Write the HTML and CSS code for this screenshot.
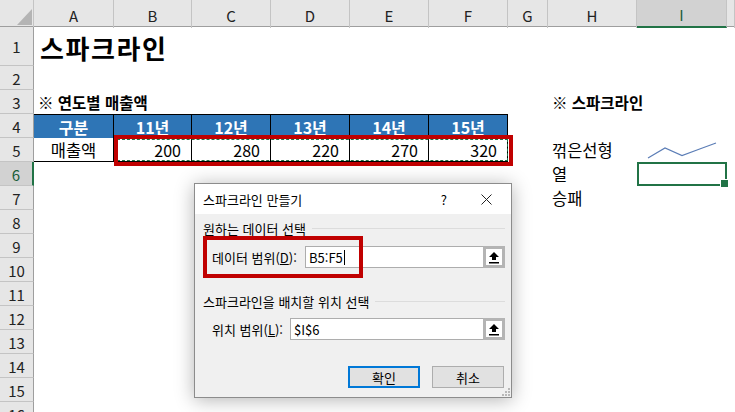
FILE: index.html
```html
<!DOCTYPE html>
<html lang="ko">
<head>
  <meta charset="UTF-8">
  <title>스파크라인</title>
  <link rel="stylesheet" href="styles.css">
</head>
<body>
  <div class="sheet">
    <div class="row head">
      <div class="corner">
        <svg width="34" height="27" viewBox="0 0 34 27"><polygon points="17,25 32,25 32,9" fill="#b4b4b4"/></svg>
      </div>
      <div class="ch">A</div>
      <div class="ch">B</div>
      <div class="ch">C</div>
      <div class="ch">D</div>
      <div class="ch">E</div>
      <div class="ch">F</div>
      <div class="ch">G</div>
      <div class="ch">H</div>
      <div class="ch sel">I</div>
      <div class="ch"></div>
    </div>

    <div class="row tall">
      <div class="rh">1</div>
      <div class="c title">스파크라인</div>
    </div>
    <div class="row"><div class="rh">2</div></div>
    <div class="row">
      <div class="rh">3</div>
      <div class="c bold">※ 연도별 매출액</div>
      <div class="c bold colH">※ 스파크라인</div>
    </div>
    <div class="row">
      <div class="rh">4</div>
      <div class="c th">구분</div>
      <div class="c th">11년</div>
      <div class="c th">12년</div>
      <div class="c th">13년</div>
      <div class="c th">14년</div>
      <div class="c th">15년</div>
    </div>
    <div class="row">
      <div class="rh">5</div>
      <div class="c td center">매출액</div>
      <div class="c td num">200</div>
      <div class="c td num">280</div>
      <div class="c td num">220</div>
      <div class="c td num">270</div>
      <div class="c td num">320</div>
      <div class="c colH">꺾은선형</div>
      <div class="c spark">
        <svg width="90" height="24" viewBox="0 0 90 24">
          <polyline points="11,20 28,10 45,17.5 62,11.3 79,5" fill="none" stroke="#5b7db6" stroke-width="1.2"/>
        </svg>
      </div>
    </div>
    <div class="row">
      <div class="rh sel">6</div>
      <div class="c colH">열</div>
      <div class="c selcell"></div>
    </div>
    <div class="row">
      <div class="rh">7</div>
      <div class="c colH">승패</div>
    </div>
    <div class="row"><div class="rh">8</div></div>
    <div class="row"><div class="rh">9</div></div>
    <div class="row"><div class="rh">10</div></div>
    <div class="row"><div class="rh">11</div></div>
    <div class="row"><div class="rh">12</div></div>
    <div class="row"><div class="rh">13</div></div>
    <div class="row"><div class="rh">14</div></div>
    <div class="row"><div class="rh">15</div></div>
    <div class="row"><div class="rh">16</div></div>

    <!-- copy marquee and highlight over B5:F5 -->
    <div class="ants"></div>
    <div class="mark mark-range"></div>

    <div class="dlg">
      <div class="dlg-title">
        <span class="dlg-name">스파크라인 만들기</span>
        <span class="dlg-help">?</span>
        <svg class="dlg-close" width="11" height="11" viewBox="0 0 11 11">
          <path d="M0.5 0.5 L10.5 10.5 M10.5 0.5 L0.5 10.5" stroke="#222" stroke-width="1"/>
        </svg>
      </div>

      <div class="group g1"><span>원하는 데이터 선택</span><i></i></div>
      <div class="field f1">
        <label>데이터 범위(<u>D</u>):</label>
        <div class="input w200">
          <span>B5:F5</span><span class="caret"></span>
          <div class="pick">
            <svg width="12" height="13" viewBox="0 0 12 13"><polygon points="6,1 11,6 8,6 8,9 4,9 4,6 1,6" fill="#000"/><rect x="1" y="11" width="10" height="1.5" fill="#000"/></svg>
          </div>
        </div>
      </div>

      <div class="group g2"><span>스파크라인을 배치할 위치 선택</span><i></i></div>
      <div class="field f2">
        <label>위치 범위(<u>L</u>):</label>
        <div class="input w215">
          <span>$I$6</span>
          <div class="pick">
            <svg width="12" height="13" viewBox="0 0 12 13"><polygon points="6,1 11,6 8,6 8,9 4,9 4,6 1,6" fill="#000"/><rect x="1" y="11" width="10" height="1.5" fill="#000"/></svg>
          </div>
        </div>
      </div>

      <div class="btns">
        <button class="btn primary">확인</button>
        <button class="btn">취소</button>
      </div>

      <svg class="grip" width="8" height="8" viewBox="0 0 8 8">
        <rect x="6" y="0" width="2" height="2" fill="#b8b8b8"/>
        <rect x="3" y="3" width="2" height="2" fill="#b8b8b8"/>
        <rect x="6" y="3" width="2" height="2" fill="#b8b8b8"/>
        <rect x="0" y="6" width="2" height="2" fill="#b8b8b8"/>
        <rect x="3" y="6" width="2" height="2" fill="#b8b8b8"/>
        <rect x="6" y="6" width="2" height="2" fill="#b8b8b8"/>
      </svg>

      <div class="mark mark-label"></div>
    </div>
  </div>
</body>
</html>
```

FILE: styles.css
```css
* {
  box-sizing: border-box;
}
body {
  margin: 0;
  font-family: "Noto Sans CJK KR", "Noto Sans", sans-serif;
  font-size: 15px;
  color: #000;
  background: #fff;
}
.sheet {
  position: relative;
  width: 735px;
  height: 412px;
  overflow: hidden;
}
.row {
  display: grid;
  grid-template-columns: 34px 80px 78px 79px 79px 79px 79px 40px 89px 90px 1fr;
  height: 24px;
  line-height: 1;
}
.row.tall {
  height: 39px;
}
.row.head {
  height: 27px;
  background: #e6e6e6;
  border-bottom: 1px solid #9e9e9e;
}
.corner {
  border-right: 1px solid #c4c4c4;
}
.ch {
  display: flex;
  align-items: center;
  justify-content: center;
  border-right: 1px solid #c4c4c4;
  color: #222;
  padding-top: 2px;
}
.ch.sel {
  background: #d2d2d2;
  color: #1b5e3a;
  border-bottom: 2px solid #217346;
}
.rh {
  display: flex;
  align-items: center;
  justify-content: center;
  background: #e6e6e6;
  border-right: 1px solid #9e9e9e;
  border-bottom: 1px solid #c4c4c4;
  color: #222;
  padding-top: 1px;
}
.rh.sel {
  background: #d2d2d2;
  color: #1b5e3a;
  border-right: 2px solid #217346;
}
.c {
  display: flex;
  align-items: center;
  padding: 1px 4px 0;
  white-space: nowrap;
  min-width: 0;
  font-size: 16.5px;
}
.colH {
  grid-column: 9;
}
.title {
  font-size: 26px;
  font-weight: bold;
  letter-spacing: 1.6px;
  align-items: flex-end;
  padding-left: 6px;
  padding-bottom: 5px;
}
.bold {
  font-weight: bold;
  font-size: 15.5px;
}
.th {
  background: #2e75b6;
  color: #fff;
  font-weight: bold;
  font-size: 16px;
  justify-content: center;
  border-top: 1px solid #000;
  border-right: 1px solid #000;
}
.td {
  border-right: 1px solid #000;
  border-bottom: 1px solid #000;
}
.center {
  justify-content: center;
}
.num {
  justify-content: flex-end;
  padding-right: 10px;
  font-size: 16px;
}
.spark {
  padding: 0;
}
.selcell {
  position: relative;
  border: 2px solid #217346;
}
.selcell::after {
  content: "";
  position: absolute;
  right: -4px;
  bottom: -4px;
  width: 7px;
  height: 7px;
  background: #217346;
  border: 1px solid #fff;
}

/* overlays */
.ants {
  position: absolute;
  left: 117px;
  top: 139px;
  width: 391px;
  height: 22px;
  border: 1px dashed #217346;
}
.mark {
  position: absolute;
  border: 4px solid #c00000;
}
.mark-range {
  left: 114px;
  top: 135px;
  width: 399px;
  height: 31px;
}

/* dialog */
.dlg {
  position: absolute;
  left: 194px;
  top: 183px;
  width: 318px;
  height: 215px;
  background: #f0f0f0;
  border: 1px solid #8c8c8c;
  box-shadow: 0 2px 18px rgba(0, 0, 0, 0.3);
  font-size: 13px;
  line-height: 1;
}
.dlg-title {
  display: flex;
  align-items: center;
  height: 30px;
  background: #fff;
  padding: 0 0 0 8px;
}
.dlg-name {
  flex: 1;
}
.dlg-help {
  font-size: 13px;
  margin-right: 34px;
}
.dlg-close {
  margin-right: 19px;
}
.group {
  display: flex;
  align-items: center;
  gap: 6px;
  height: 14px;
  padding: 0 6px 0 8px;
}
.group i {
  flex: 1;
  height: 1px;
  background: #dcdcdc;
}
.g1 {
  margin-top: 7px;
}
.g2 {
  margin-top: 26px;
}
.field {
  display: flex;
  align-items: center;
  padding: 0 6px 0 17px;
}
.f1 {
  margin-top: 11px;
}
.f2 {
  margin-top: 10px;
}
.input {
  display: flex;
  align-items: center;
  margin-left: auto;
  height: 22px;
  background: #fff;
  border: 1px solid #adadad;
  padding-left: 3px;
  font-size: 13px;
}
.w200 {
  width: 200px;
}
.w215 {
  width: 215px;
}
.caret {
  width: 1px;
  height: 15px;
  background: #000;
  margin-left: 1px;
}
.pick {
  display: flex;
  align-items: center;
  justify-content: center;
  margin-left: auto;
  width: 22px;
  height: 22px;
  margin-right: -1px;
  background: #fff;
  border: 3px solid #b4b4b4;
}
.btns {
  display: flex;
  justify-content: flex-end;
  gap: 12px;
  margin-top: 26px;
  padding-right: 7px;
}
.btn {
  width: 72px;
  height: 22px;
  font-family: inherit;
  font-size: 13px;
  background: #e1e1e1;
  border: 1px solid #adadad;
  padding: 0;
}
.btn.primary {
  border: 2px solid #0078d7;
}
.grip {
  position: absolute;
  right: 1px;
  bottom: 1px;
}
.mark-label {
  left: 8px;
  top: 52px;
  width: 160px;
  height: 42px;
}
```
